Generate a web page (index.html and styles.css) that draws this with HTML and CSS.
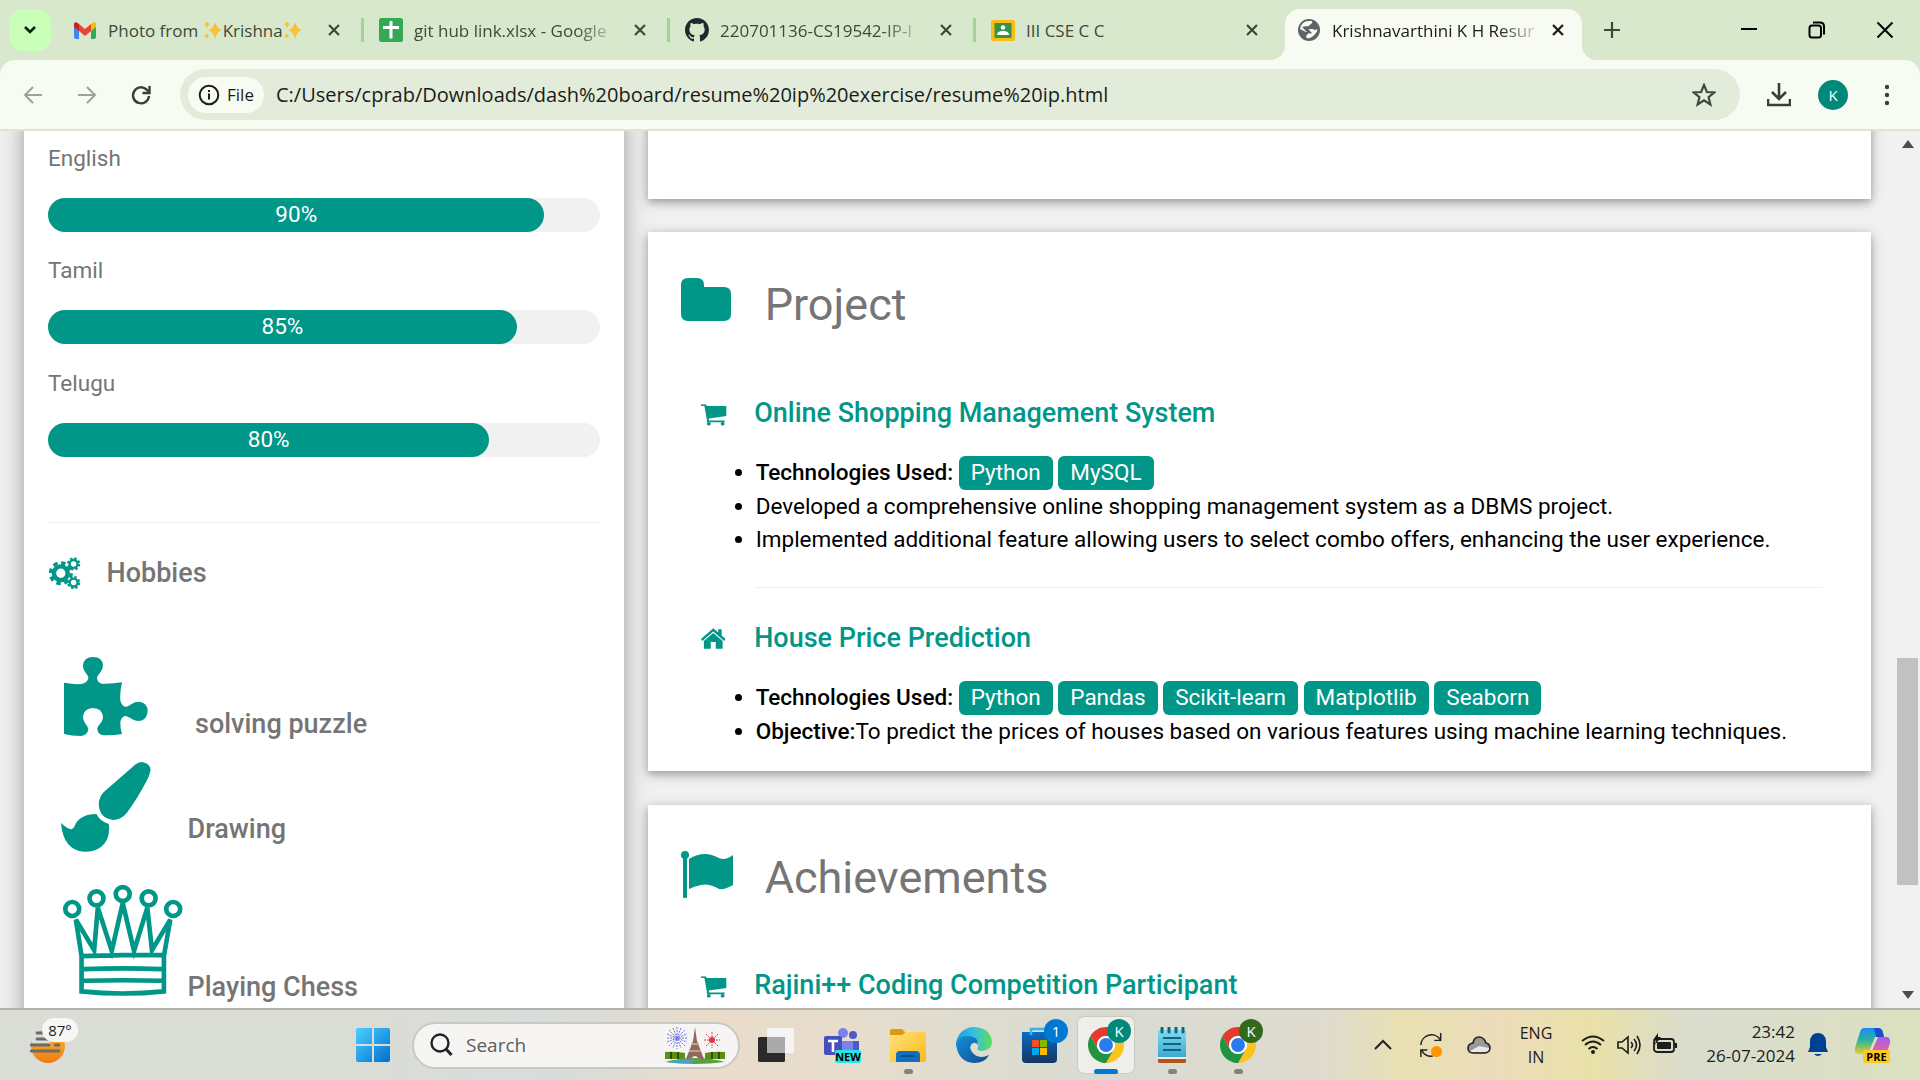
FILE: index.html
```html
<!DOCTYPE html>
<html lang="en">
<head>
<meta charset="utf-8">
<title>Krishnavarthini K H Resume</title>
<link rel="stylesheet" href="styles.css">
</head>
<body>
<svg class="defs" aria-hidden="true">
  <defs>
    <linearGradient id="winblue" x1="0" y1="0" x2="1" y2="1"><stop offset="0" stop-color="#4bd0ff"/><stop offset="1" stop-color="#006fd0"/></linearGradient>
    <linearGradient id="sun" x1="0" y1="0" x2="0" y2="1"><stop offset="0" stop-color="#f8c035"/><stop offset="1" stop-color="#f07a12"/></linearGradient>
    <linearGradient id="folder" x1="0" y1="0" x2="1" y2="1"><stop offset="0" stop-color="#ffe080"/><stop offset="1" stop-color="#fdbb12"/></linearGradient>
    <linearGradient id="edgetop" x1="0" y1="0" x2="1" y2="0"><stop offset="0" stop-color="#1b9de2"/><stop offset=".5" stop-color="#35c1e0"/><stop offset="1" stop-color="#5fdc55"/></linearGradient>
    <linearGradient id="edgelow" x1="0" y1="0" x2="1" y2="1"><stop offset="0" stop-color="#1490df"/><stop offset="1" stop-color="#114a8b"/></linearGradient>
    <linearGradient id="store" x1="0" y1="0" x2="0" y2="1"><stop offset="0" stop-color="#0a6cc4"/><stop offset="1" stop-color="#163560"/></linearGradient>
    <linearGradient id="note" x1="0" y1="0" x2="0" y2="1"><stop offset="0" stop-color="#7edcf0"/><stop offset="1" stop-color="#3ba9cf"/></linearGradient>
    <linearGradient id="copa" x1="0" y1="0" x2="0" y2="1"><stop offset="0" stop-color="#1a8cf0"/><stop offset=".5" stop-color="#2fb59a"/><stop offset="1" stop-color="#f0cb20"/></linearGradient>
    <linearGradient id="copb" x1="0" y1="0" x2="0" y2="1"><stop offset="0" stop-color="#a45cf0"/><stop offset="1" stop-color="#fb6a70"/></linearGradient>
    <symbol id="close" viewBox="0 0 24 24"><path d="M7 7l10 10M17 7L7 17" fill="none" stroke="currentColor" stroke-width="2.2"/></symbol>
    <symbol id="sparkle" viewBox="0 0 20 22"><path d="M12 3q2 7 7 8q-5 1-7 9q-2-8-7-9q5-1 7-8zM4 2q1 3 3 3q-2 1-3 4q-1-3-3-4q2 0 3-3zM4 14q0 2 2 3q-2 1-2 3q-1-2-3-3q2-1 3-3z" fill="#fac036"/></symbol>
    <symbol id="cart" viewBox="0 0 26 22"><path d="M0 0h5l1 2h20v10L8 14.500v2h16v2H6v-3L3.500 2H0z" fill="currentColor"/><circle cx="8" cy="20" r="2" fill="currentColor"/><circle cx="22" cy="20" r="2" fill="currentColor"/></symbol>
    <symbol id="chrome" viewBox="2 2 44 44"><path d="M4.950 13A22 22 0 0 1 43.050 13H24A11 11 0 0 0 14.470 29.500z" fill="#e33b2e"/><path d="M43.050 13A22 22 0 0 1 24 46L33.530 29.500A11 11 0 0 0 24 13z" fill="#fcc31e"/><path d="M24 46A22 22 0 0 1 4.950 13L14.470 29.500A11 11 0 0 0 33.530 29.500z" fill="#229342"/><circle cx="24" cy="24" r="11" fill="#fff"/><circle cx="24" cy="24" r="8.500" fill="#2a7bec"/></symbol>
  </defs>
</svg>

<header class="browser">
  <div class="tabstrip">
    <button class="tab-search" aria-label="Search tabs"><svg width="16" height="16" viewBox="0 0 16 16"><path d="M3 5l5 5 5-5" fill="none" stroke="#0c1f08" stroke-width="2.600"/></svg></button>
    <div class="tab">
      <svg class="favicon" viewBox="0 0 24 24"><path d="M1 5v14q0 2 2 2h3V10z" fill="#4285f4"/><path d="M23 5v14q0 2-2 2h-3V10z" fill="#34a853"/><path d="M18 6l2-1.500q3-1 3 2V9l-5 4z" fill="#fbbc04"/><path d="M6 6v7l6 5 6-5V6l-6 5z" fill="#ea4335"/><path d="M1 9V6.500q0-3 3-2L6 6v7z" fill="#c5221f"/></svg>
      <span class="tab-title">Photo from <svg class="spark"><use href="#sparkle"/></svg>Krishna<svg class="spark"><use href="#sparkle"/></svg></span>
      <button class="tab-close" aria-label="Close tab"><svg><use href="#close"/></svg></button>
    </div>
    <div class="tab">
      <svg class="favicon" viewBox="0 0 24 24"><rect width="24" height="24" rx="2.500" fill="#34a853"/><path d="M10.500 3h3v5H20v3h-6.500v9.500h-3V11H4V8h6.500z" fill="#fff"/></svg>
      <span class="tab-title fade">git hub link.xlsx - Google</span>
      <button class="tab-close" aria-label="Close tab"><svg><use href="#close"/></svg></button>
    </div>
    <div class="tab">
      <svg class="favicon" viewBox="0 0 16 16"><path fill="#20282e" d="M8 0C3.580 0 0 3.580 0 8c0 3.540 2.290 6.530 5.470 7.590.4.070.55-.17.55-.38 0-.19-.01-.82-.01-1.490-2.010.37-2.530-.49-2.690-.94-.09-.23-.48-.94-.82-1.130-.28-.15-.68-.52-.01-.53.63-.01 1.080.58 1.230.82.72 1.210 1.870.87 2.330.66.070-.52.28-.87.51-1.070-1.780-.2-3.640-.89-3.640-3.950 0-.87.31-1.590.82-2.150-.08-.2-.36-1.020.08-2.120 0 0 .67-.21 2.200.82.64-.18 1.320-.27 2-.27s1.360.09 2 .27c1.530-1.040 2.200-.82 2.200-.82.44 1.100.16 1.920.08 2.120.51.56.82 1.270.82 2.150 0 3.070-1.870 3.750-3.650 3.950.29.25.54.73.54 1.480 0 1.070-.01 1.930-.01 2.200 0 .21.150.46.55.38A8.010 8.010 0 0 0 16 8c0-4.420-3.580-8-8-8z"/></svg>
      <span class="tab-title fade">220701136-CS19542-IP-l</span>
      <button class="tab-close" aria-label="Close tab"><svg><use href="#close"/></svg></button>
    </div>
    <div class="tab tab-last">
      <svg class="favicon" viewBox="0 0 24 24"><rect y="2" width="24" height="21" rx="2" fill="#f9bd15"/><rect x="3.500" y="5" width="17" height="15" fill="#37924a"/><circle cx="12" cy="9.500" r="2.200" fill="#fff"/><path d="M6 17q0-4 6-4t6 4z" fill="#fff"/></svg>
      <span class="tab-title">III CSE C C</span>
      <button class="tab-close" aria-label="Close tab"><svg><use href="#close"/></svg></button>
    </div>
    <div class="tab tab-active">
      <svg class="favicon" viewBox="0 0 24 24"><circle cx="12" cy="12" r="11" fill="#5f6368"/><path d="M12 3h3q1 2-1 3t-3 3q0 2 2 2h3q2 2 4 0 1 1-1 4t-6 5q-3 1-4-1 0-2 2-3v-2H9L3 11q0-3 3-6 2-2 6-2z" fill="#f8fbf2"/><path d="M10 8q4 1 2 4l3 3q-2 1-4 0L5 9z" fill="#5f6368"/></svg>
      <span class="tab-title fade">Krishnavarthini K H Resur</span>
      <button class="tab-close" aria-label="Close tab"><svg><use href="#close"/></svg></button>
    </div>
    <button class="new-tab" aria-label="New tab"><svg width="24" height="24" viewBox="0 0 24 24"><path d="M12 4v16M4 12h16" stroke="#3b4a37" stroke-width="2.200"/></svg></button>
    <div class="window-controls">
      <button aria-label="Minimize"><svg viewBox="0 0 24 24"><path d="M4 11h16" stroke="#000" stroke-width="2"/></svg></button>
      <button aria-label="Restore"><svg viewBox="0 0 24 24"><rect x="4.500" y="7.500" width="11.500" height="12" rx="2.500" fill="none" stroke="#000" stroke-width="2"/><path d="M8 4.500h7q4 0 4 4v8" fill="none" stroke="#000" stroke-width="2"/></svg></button>
      <button aria-label="Close"><svg viewBox="0 0 24 24"><path d="M4.500 4.500l15 15M19.500 4.500l-15 15" stroke="#000" stroke-width="2"/></svg></button>
    </div>
  </div>
  <div class="toolbar">
    <button class="nav" aria-label="Back"><svg viewBox="0 0 24 24"><path d="M21 12H4M12 4l-8 8 8 8" fill="none" stroke="#9aa396" stroke-width="2"/></svg></button>
    <button class="nav" aria-label="Forward"><svg viewBox="0 0 24 24"><path d="M3 12h17M12 4l8 8-8 8" fill="none" stroke="#9aa396" stroke-width="2"/></svg></button>
    <button class="nav" aria-label="Reload"><svg viewBox="0 0 24 24"><path d="M20 13a8 8 0 1 1-2.500-6.500L20 9" fill="none" stroke="#33432f" stroke-width="2.400"/><path d="M20.500 3v7h-7" fill="none" stroke="#33432f" stroke-width="2.400"/></svg></button>
    <div class="omnibox">
      <button class="file-chip"><svg width="22" height="22" viewBox="0 0 22 22"><circle cx="11" cy="11" r="9.300" fill="none" stroke="#1a1c18" stroke-width="2"/><path d="M11 9.500v6M11 6v2" stroke="#1a1c18" stroke-width="2"/></svg>File</button>
      <input class="url" aria-label="Address" value="C:/Users/cprab/Downloads/dash%20board/resume%20ip%20exercise/resume%20ip.html">
      <button class="star" aria-label="Bookmark"><svg viewBox="0 0 24 24"><path d="M12 2l2.900 7 7.300.5-5.600 4.700 1.800 7.300L12 17.400l-6.400 4.100 1.800-7.300L1.800 9.500 9.100 9z" fill="none" stroke="#40493d" stroke-width="2.200"/></svg></button>
    </div>
    <button class="tool" aria-label="Downloads"><svg viewBox="0 0 24 24"><path d="M12 0v15M5 9l7 7 7-7M1 16v6h22v-6" fill="none" stroke="#33432f" stroke-width="2.600"/></svg></button>
    <button class="profile" aria-label="Profile">K</button>
    <button class="tool" aria-label="Menu"><svg viewBox="0 0 24 24"><g fill="#33432f"><circle cx="12" cy="4" r="2.200"/><circle cx="12" cy="12" r="2.200"/><circle cx="12" cy="20" r="2.200"/></g></svg></button>
  </div>
</header>

<main class="viewport">
  <div class="scroller">
    <div class="page">
      <aside class="sidebar">
        <p>English</p>
        <div class="meter"><div class="meter-fill" style="width:90%">90%</div></div>
        <p>Tamil</p>
        <div class="meter"><div class="meter-fill" style="width:85%">85%</div></div>
        <p>Telugu</p>
        <div class="meter"><div class="meter-fill" style="width:80%">80%</div></div>
        <br>
        <hr>
        <h4 class="side-title"><svg class="fw" viewBox="0 0 35 34"><g fill="none" stroke="#009688"><circle cx="13" cy="17" r="7" stroke-width="4.500"/><circle cx="13" cy="17" r="10.500" stroke-width="3.500" stroke-dasharray="4.500 3.750"/><circle cx="26" cy="7.500" r="4" stroke-width="2.400"/><circle cx="26" cy="7.500" r="5.700" stroke-width="2" stroke-dasharray="2.500 1.980"/><circle cx="26" cy="26.500" r="4" stroke-width="2.400"/><circle cx="26" cy="26.500" r="5.700" stroke-width="2" stroke-dasharray="2.500 1.980"/></g></svg>Hobbies</h4>
        <ul class="hobbies">
          <li><svg width="98" height="66" viewBox="144 138 441 297"><path fill="#009688" d="M192 248Q230 255 248 251Q266 245 265 231C262 222 249 214 249 196Q252 171 279 171Q307 171 309 196C308 215 294 222 291 233Q292 248 306 251Q335 252 366 247Q359 280 361 302Q366 320 379 320C393 316 398 305 418 305Q443 308 443 334Q441 362 417 363C396 362 389 350 377 348Q364 349 361 366Q360 385 366 402Q330 408 306 405Q291 400 292 384C296 372 308 368 309 350Q306 325 279 324Q251 326 249 350C250 370 264 376 265 387Q263 405 243 408Q215 408 192 402Z"/></svg>solving puzzle</li>
          <li><svg width="93" height="70" viewBox="144 435 420 315"><path fill="#009688" d="M407 493Q418 485 430 486Q452 490 453 510Q450 528 440 544Q412 597 381 639Q364 660 340 660Q298 655 297 613Q297 590 313 575ZM183 669Q202 686 214 688Q221 687 224 678Q238 643 290 642Q300 664 327 672Q333 715 306 739Q285 757 252 756Q190 750 183 669Z"/></svg>Drawing</li>
          <li><svg width="93" height="105" viewBox="144 750 420 471"><g fill="none" stroke="#009688" stroke-width="14"><circle cx="217" cy="926" r="21"/><circle cx="290" cy="894" r="21"/><circle cx="369" cy="881" r="21"/><circle cx="447" cy="894" r="21"/><circle cx="521" cy="926" r="21"/><path d="M245 1068L228 958L283 1050L294 922L336 1052L369 908L403 1052L443 922L457 1050L512 958L493 1068M245 1064V1174Q369 1187 493 1174V1064Q369 1064 245 1068M252 1107Q369 1103 486 1107M252 1142Q369 1139 486 1142"/></g></svg>Playing Chess</li>
        </ul>
      </aside>

      <div class="content">
        <section class="card card-previous"></section>

        <section class="card">
          <h2><svg class="fw" viewBox="0 0 69 54"><path fill="#009688" d="M9 11q0-7 7-7h9q7 0 7 7v2h20q7 0 7 7v20q0 7-7 7H16q-7 0-7-7z"/></svg>Project</h2>
          <div class="entry">
            <h5><svg class="fw" viewBox="0 0 35 27"><use href="#cart" x="5" y="4" width="26" height="22"/></svg>Online Shopping Management System</h5>
            <ul>
              <li><b>Technologies Used:</b> <span class="tag">Python</span> <span class="tag">MySQL</span></li>
              <li>Developed a comprehensive online shopping management system as a DBMS project.</li>
              <li>Implemented additional feature allowing users to select combo offers, enhancing the user experience.</li>
            </ul>
            <hr>
            <h5><svg class="fw" viewBox="0 0 35 27"><path fill="#009688" d="M17.500 3L5 14l1.500 2L17.500 6.500 28.500 16l1.500-2-4-3.500V4h-3.500v3.500zM8 16l9.500-8 9.500 8v8h-7v-7h-5v7H8z"/></svg>House Price Prediction</h5>
            <ul>
              <li><b>Technologies Used:</b> <span class="tag">Python</span> <span class="tag">Pandas</span> <span class="tag">Scikit-learn</span> <span class="tag">Matplotlib</span> <span class="tag">Seaborn</span></li>
              <li><b>Objective:</b>To predict the prices of houses based on various features using machine learning techniques.</li>
            </ul>
          </div>
        </section>

        <section class="card card-last">
          <h2><svg class="fw" viewBox="0 0 69 54"><g fill="#009688"><circle cx="13" cy="8" r="4"/><rect x="11" y="8" width="4" height="43" rx="1"/><path d="M17 12q8-5 16-5 6 0 14 4 6 3 14-3v30q-8 5-14 4-10-6-18-4-6 1-12 4z"/></g></svg>Achievements</h2>
          <div class="entry">
            <h5><svg class="fw" viewBox="0 0 35 27"><use href="#cart" x="5" y="4" width="26" height="22"/></svg>Rajini++ Coding Competition Participant</h5>
          </div>
        </section>
      </div>
    </div>
  </div>
  <div class="scrollbar">
    <svg width="12" height="8" viewBox="0 0 12 8"><path d="M6 0l6 8H0z" fill="#4d4d4d"/></svg>
    <div class="track"><div class="thumb"></div></div>
    <svg width="12" height="8" viewBox="0 0 12 8"><path d="M6 8l6-8H0z" fill="#4d4d4d"/></svg>
  </div>
</main>

<footer class="taskbar">
  <button class="weather" aria-label="Weather">
    <svg width="36" height="44" viewBox="0 0 36 44"><circle cx="18" cy="25" r="17" fill="url(#sun)"/><path d="M20 17h-18" stroke="#dcded8" stroke-width="11"/><path d="M7 12h12M7 18h22M1 24h18M25 24h4M1 30h28" stroke="#6b6b6b" stroke-width="2.800" stroke-linecap="round"/></svg>
    <span class="weather-badge">87°</span>
  </button>
  <div class="apps">
    <button class="start" aria-label="Start"><svg width="36" height="36" viewBox="0 0 36 36"><path fill="url(#winblue)" d="M1 3q0-2 2-2h14v16H1zM19 1h14q2 0 2 2v14H19zM1 19h16v16H3q-2 0-2-2zM19 19h16v14q0 2-2 2H19z"/></svg></button>
    <div class="search">
      <svg width="24" height="24" viewBox="0 0 24 24"><circle cx="11" cy="10" r="8.500" fill="none" stroke="#222" stroke-width="2.400"/><path d="M17 16l5.500 6" stroke="#222" stroke-width="3"/></svg>
      <input aria-label="Search" placeholder="Search">
      <svg width="62" height="38" viewBox="0 0 62 38"><path d="M1 36q30-8 60 0-30 4-60 0z" fill="#58a13f"/><path d="M4 36q12-4 28-2l-6 3q-14 1-22-1z" fill="#47a3c4"/><path d="M31 1l2 14 7 18h-5q-4-6-8 0h-5l7-18z" fill="#8f6a5c"/><path d="M27 18h8M25 25h12" stroke="#d8b09a" stroke-width="1.500"/><path d="M1 26q10-1 20 1v6H1zM41 27q10-2 20-1v7H41z" fill="#5d8f12"/><path d="M7 26v7M14 26v7M48 26v7M55 26v7" stroke="#264f12" stroke-width="2"/><g stroke="#6a70e8" stroke-width="1" stroke-dasharray="2 1"><path d="M13 1v22M3 12h20M5 4l16 16M21 4L5 20M9 2l8 20M17 2L9 22M3 8l20 8M3 16l20-8"/></g><g stroke="#e0404a" stroke-width="1" stroke-dasharray="2 1"><path d="M48 6v16M40 14h16M42 8l12 12M54 8L42 20"/></g><circle cx="48" cy="14" r="3" fill="#dc3844"/></svg>
    </div>
    <button class="app" aria-label="Task view"><svg viewBox="0 0 36 36"><rect y="10" width="27" height="25" rx="1.500" fill="#2a2a2a"/><rect x="9" y="1" width="27" height="25" rx="1" fill="#f4f4f4"/><path d="M9 10h18v16H9z" fill="#aaa"/></svg></button>
    <button class="app" aria-label="Teams"><svg viewBox="0 0 36 36"><circle cx="19" cy="6" r="5" fill="#7b83eb"/><circle cx="29" cy="8" r="4" fill="#5059c9"/><path d="M22 14h13v12q-2 6-8 5z" fill="#5059c9"/><path d="M14 14h15v14q-4 6-10 3z" fill="#7b83eb"/><rect y="9" width="18" height="19" rx="2" fill="#4650bd"/><path d="M4 14h10M9 14v11" stroke="#fff" stroke-width="2.600"/></svg><span class="new">NEW</span></button>
    <button class="app running" aria-label="File Explorer"><svg viewBox="0 0 36 36"><path d="M0 4q0-2 2-2h10l4 4v4H0z" fill="#dc9a10"/><path d="M0 8h12l4-3h18q2 0 2 2v27q0 1-2 1H0z" fill="url(#folder)"/><path d="M6 35v-7q0-4 4-4h16q4 0 4 4v7z" fill="#0f70bf"/><path d="M11 29h14" stroke="#0a4c8c" stroke-width="2"/></svg></button>
    <button class="app" aria-label="Edge"><svg viewBox="0 0 36 36"><path d="M0 19A18 18 0 0 1 18 0Q35 1 36 15q0 8-10 9-6 0-4-4 2-8-7-10Q4 10 0 19z" fill="url(#edgetop)"/><path d="M0 17Q3 8 13 9q10 1 9 9-2-3-5-2-5 3-1 9 6 8 17 3-4 8-15 8Q2 35 0 17z" fill="url(#edgelow)"/></svg></button>
    <button class="app" aria-label="Microsoft Store"><svg viewBox="0 0 36 36"><path d="M0 5h35v27q0 4-4 4H4q-4 0-4-4z" fill="url(#store)"/><path d="M9 8V2h14" fill="none" stroke="#35b5ee" stroke-width="2.500"/><path d="M10 13h7v7h-7z" fill="#f25022"/><path d="M18 13h7v7h-7z" fill="#7fba00"/><path d="M10 21h7v7h-7z" fill="#00a4ef"/><path d="M18 21h7v7h-7z" fill="#ffb900"/></svg><span class="badge blue">1</span></button>
    <button class="app active" aria-label="Chrome"><svg><use href="#chrome"/></svg><span class="badge teal">K</span></button>
    <button class="app running" aria-label="Notepad"><svg viewBox="0 0 36 36"><path d="M4 32h28v3q0 1-2 1H6q-2 0-2-1z" fill="#b5541a"/><path d="M4 28h28v4H4z" fill="#f2efec"/><path d="M4 4q0-1 2-1h24q2 0 2 1v26H4z" fill="url(#note)"/><path d="M9 11h18M9 17h18M9 23h18" stroke="#15627c" stroke-width="2"/><path d="M8 1v4M15 1v4M22 1v4M29 1v4" stroke="#15627c" stroke-width="3" stroke-linecap="round"/></svg></button>
    <button class="app running" aria-label="Chrome profile"><svg><use href="#chrome"/></svg><span class="badge green">K</span></button>
  </div>
  <div class="tray">
    <button aria-label="Hidden icons"><svg class="t" viewBox="0 0 24 24"><path d="M4 16l8-8 8 8" fill="none" stroke="#222" stroke-width="2"/></svg></button>
    <button class="wide" aria-label="Updates"><svg class="t" viewBox="0 0 24 26"><path d="M1 13A11.500 11.500 0 0 1 22 7M22.500 0v8h-7M14 25Q6 26 2 19M1 26v-7.500h7" fill="none" stroke="#222" stroke-width="1.600"/><circle cx="18" cy="20" r="6" fill="#ff9500"/></svg></button>
    <button class="wide" aria-label="OneDrive"><svg class="t" viewBox="0 0 24 24"><path d="M6 20q-5 0-5-5 0-4 5-5 1-6 6-6t7 6q4 1 4 5t-5 5z" fill="#999" stroke="#222" stroke-width="1.600"/><path d="M3 18l9-5 10 2q0 4-4 4H6q-2 0-3-1z" fill="#e8e8e8"/></svg></button>
    <button class="lang">ENG<br>IN</button>
    <button class="status" aria-label="Network, volume and battery">
      <svg class="t" viewBox="0 0 24 24"><path d="M1 8q11-9 22 0M4 12q8-7 16 0M7.500 16q4.500-4 9 0" fill="none" stroke="#1c1c1c" stroke-width="1.800"/><circle cx="12" cy="19" r="2" fill="#1c1c1c"/></svg>
      <svg class="t" viewBox="0 0 24 24"><path d="M1 9h4l6-5v16l-6-5H1zM14 9q3 3 0 6M17 6q5 6 0 12M20 3q6 9 0 18" fill="none" stroke="#1c1c1c" stroke-width="1.600"/></svg>
      <svg class="t" viewBox="0 0 24 24"><rect x="1" y="6" width="20" height="13" rx="3" fill="none" stroke="#1c1c1c" stroke-width="1.800"/><rect x="4" y="9" width="14" height="7" rx="1" fill="#1c1c1c"/><path d="M22 10h2v5h-2z" fill="#1c1c1c"/><path d="M5 0L0 7h3l-1 5 6-8H5z" fill="#1c1c1c"/></svg>
    </button>
    <button class="clock">23:42<br>26-07-2024</button>
    <button class="bell" aria-label="Notifications"><svg width="20" height="26" viewBox="0 0 20 26"><path d="M10 1q7 0 8 8v6l2 5H0l2-5V9q1-8 8-8zM6 22h8q-4 4-8 0z" fill="#003f92"/></svg></button>
    <button class="copilot" aria-label="Copilot"><svg width="36" height="36" viewBox="0 0 36 36"><path d="M9 1h14q4 0 5 5l1 4h-9l-7 17H3q-4-1-3-6L5 5q1-4 4-4z" fill="url(#copa)"/><path d="M19 1h4q4 0 5 5l1 4h-8z" fill="#1a4fc8"/><path d="M23 10h9q4 1 3 6l-4 12q-1 4-5 4H12q3-1 5-8z" fill="url(#copb)"/></svg><span class="pre">PRE</span></button>
  </div>
</footer>
</body>
</html>
```
FILE: styles.css
```css
* { box-sizing: border-box; }

body {
  margin: 0;
  height: 100vh;
  display: flex;
  flex-direction: column;
  overflow: hidden;
  font-family: "Open Sans", "Noto Sans", sans-serif;
}

button, input {
  font: inherit;
  color: inherit;
  border: 0;
  padding: 0;
  margin: 0;
  background: none;
}

button {
  display: flex;
  align-items: center;
  justify-content: center;
  flex-shrink: 0;
}

svg { flex-shrink: 0; }
.defs { position: absolute; width: 0; height: 0; }

/* Browser chrome */
.browser { background: #d8e8cd; flex-shrink: 0; }
.tabstrip { display: flex; align-items: center; height: 60px; padding-left: 9px; color: #3b4a37; }
.tab-search { width: 42px; height: 42px; border-radius: 14px; background: #c9ffb8; margin-right: 7px; }

.tab {
  display: flex;
  align-items: center;
  flex: 0 1 306px;
  min-width: 0;
  height: 24px;
  padding: 0 15px;
  border-right: 3px solid #a3d494;
}
.tab-last { border-right-color: transparent; }
.favicon { width: 24px; height: 24px; margin-right: 11px; }
.tab-title {
  flex: 1;
  min-width: 0;
  overflow: hidden;
  white-space: nowrap;
  font-size: 17px;
  line-height: 24px;
  padding-top: 2px;
}
.fade { mask-image: linear-gradient(90deg, #000 calc(100% - 36px), rgba(0, 0, 0, .2)); }
.spark { width: 20px; height: 22px; vertical-align: top; }
.tab-close { margin-left: 16px; }
.tab-close svg { width: 24px; height: 24px; }

.tab-active {
  position: relative;
  flex-basis: 297px;
  align-self: flex-end;
  height: 51px;
  padding: 0 12px 9px;
  margin-left: 3px;
  border: 0;
  border-radius: 15px 15px 0 0;
  background: #f8fbf2;
  color: #1a1c18;
}
.tab-active .tab-close { margin-left: 12px; }
.tab-active::before, .tab-active::after {
  content: "";
  position: absolute;
  bottom: 0;
  width: 15px;
  height: 15px;
}
.tab-active::before { right: 100%; background: radial-gradient(circle at 0 0, transparent 15px, #f8fbf2 15px); }
.tab-active::after { left: 100%; background: radial-gradient(circle at 100% 0, transparent 15px, #f8fbf2 15px); }

.new-tab { margin-left: 18px; }
.window-controls { display: flex; margin-left: auto; padding-right: 1px; }
.window-controls button { width: 68px; height: 60px; }
.window-controls svg { width: 24px; height: 24px; }

.toolbar {
  display: flex;
  align-items: center;
  height: 71px;
  padding: 0 21px 0 6px;
  border-bottom: 2px solid #dfe5d4;
  border-radius: 15px 15px 0 0;
  background: #f8fbf2;
}
.nav { width: 54px; height: 54px; }
.nav svg, .star svg, .tool svg { width: 24px; height: 24px; }
.omnibox {
  display: flex;
  align-items: center;
  flex: 1;
  height: 51px;
  margin-left: 12px;
  padding: 0 24px 0 8px;
  border-radius: 26px;
  background: #e3ecdb;
  color: #1a1c18;
}
.file-chip {
  width: 76px;
  height: 36px;
  gap: 7px;
  border-radius: 18px;
  background: #f8fbf2;
  font-size: 17px;
}
.url { flex: 1; height: 36px; margin-left: 12px; font-size: 20px; }
.tool { width: 24px; margin: 0 0 0 27px; }
.profile {
  width: 30px;
  height: 30px;
  margin-left: 27px;
  border-radius: 50%;
  background: #00897b;
  color: #fff;
  font-size: 15px;
}

/* Page viewport and scrollbar */
.viewport { display: flex; flex: 1; min-height: 0; background: #f1f1f1; }
.scroller { flex: 1; min-width: 0; overflow: hidden; }
.scrollbar {
  display: flex;
  flex-direction: column;
  align-items: center;
  justify-content: space-between;
  width: 25px;
  padding: 9px 0;
}
.track { display: grid; flex: 1; width: 21px; margin: 4px 0; grid-template-rows: 507fr 227fr 102fr; }
.thumb { grid-row: 2; background: #c1c1c1; }

/* Résumé page, shown at 150% */
.page {
  zoom: 1.5;
  display: grid;
  grid-template-columns: 1fr 2fr;
  gap: 0;
  min-height: 100%;
  margin: -15px 8px 0;
  font-family: Roboto, "Liberation Sans", sans-serif;
  font-size: 15px;
  line-height: 1.5;
  color: #000;
}
.page h2, .page h4, .page h5 { font-weight: 400; margin: 0; }
.page hr { border: 0; border-top: 1px solid #eee; margin: 20px 0; }
.page b { font-weight: 500; }

.sidebar {
  margin: 0 8px;
  padding: 22px 16px 16px;
  background: #fff;
  color: #757575;
  box-shadow: 0 4px 10px rgba(0, 0, 0, .2), 0 4px 20px rgba(0, 0, 0, .19);
}
.sidebar p { margin: 15px 0; }
.sidebar p:first-child { margin-top: 0; }
.meter { border-radius: 16px; background: #f1f1f1; }
.meter-fill { border-radius: 16px; background: #009688; color: #fff; text-align: center; }
.page .sidebar hr { margin-top: 21px; }

.fw { height: 1em; width: 23px; margin-right: 16px; }
.page .side-title { display: flex; align-items: center; font-size: 18px; font-weight: 500; }
.side-title .fw { height: 23px; }
.hobbies { list-style: none; margin: 35px 0 0; padding: 0; font-size: 18px; font-weight: 500; }
.hobbies li { display: flex; align-items: flex-end; }
.hobbies svg { overflow: visible; }

.content { margin: 0 8px; min-width: 0; }
.card {
  margin-bottom: 1.5em;
  padding: 0 16px;
  overflow: auto;
  background: #fff;
  box-shadow: 0 2px 5px rgba(0, 0, 0, .26), 0 2px 10px rgba(0, 0, 0, .16);
}
.card-previous { height: 60px; }
.card-last { padding-bottom: 32px; }
.page .card h2 {
  display: flex;
  align-items: center;
  margin: 10px 0;
  padding: 16px 0;
  font-size: 30px;
  color: #757575;
}
.card h2 .fw { width: 46px; height: 36px; margin-bottom: 5px; }
.entry { padding: 10px 16px 0; }
.page .card h5 { display: flex; align-items: center; font-size: 18px; font-weight: 500; color: #009688; }
.card ul { margin: 15px 0; padding-left: 40px; }
.card .entry hr { margin-left: 40px; }
.tag {
  display: inline-block;
  padding: 0 8px;
  border-radius: 4px;
  background: #009688;
  color: #fff;
}

/* Taskbar */
.taskbar {
  display: flex;
  align-items: center;
  flex-shrink: 0;
  height: 72px;
  padding-right: 29px;
  border-top: 2px solid #b3b3ab;
  background: linear-gradient(90deg, #dadcd6 0, #dadcd6 20%, #d8dddb 26%, #d9dcd9 30%, #eadccb 37%, #e6ddcd 45%, #dddcd0 52%, #d9dbd3 58%, #dfdbce 69%, #e9e0b2 73%, #ecdcba 78%, #e9e1a8 83%, #dadcce 88%, #dbe1c0 100%);
  color: #1c1c1c;
}
.weather { position: relative; margin: 0 289px 4px 30px; }
.weather-badge {
  position: absolute;
  left: 12px;
  top: -3px;
  width: 36px;
  height: 24px;
  border-radius: 12px;
  background: #f6f6f4;
  font-size: 15px;
  line-height: 24px;
}
.apps { display: flex; align-items: center; }
.search {
  display: flex;
  align-items: center;
  width: 328px;
  height: 47px;
  margin: 0 3px 0 21px;
  padding: 0 12px 0 15px;
  border: 2px solid #c9c9c4;
  border-radius: 24px;
  background: #f6f5f3;
}
.search input { flex: 1; min-width: 0; margin-left: 13px; font-size: 19px; }
.search input::placeholder { color: #5c5c5c; opacity: 1; }
.app { position: relative; width: 56px; height: 56px; margin: 0 5px; border-radius: 6px; }
.app svg { width: 36px; height: 36px; }
.app.active { background: #f0eeea; box-shadow: 0 0 1px 1px rgba(0, 0, 0, .08); }
.app.running::after, .app.active::after {
  content: "";
  position: absolute;
  bottom: -1px;
  width: 9px;
  height: 5px;
  border-radius: 3px;
  background: #85827b;
}
.app.active::after { width: 24px; background: #0078d4; }
.badge {
  position: absolute;
  right: 3px;
  top: 2px;
  width: 24px;
  height: 24px;
  border-radius: 50%;
  color: #fff;
  font-size: 15px;
  line-height: 24px;
}
.badge.blue { background: #0078d4; right: 0; }
.badge.teal { background: #00897b; }
.badge.green { background: #33691e; }
.new, .pre {
  position: absolute;
  left: 21px;
  bottom: 10px;
  width: 26px;
  height: 13px;
  border-radius: 2px;
  background: #25e6ea;
  color: #000;
  font-size: 11px;
  font-weight: 700;
  line-height: 13px;
}

.tray { display: flex; align-items: center; margin-left: auto; }
.t { width: 24px; height: 24px; }
.tray .wide { margin-left: 24px; }
.lang, .clock { line-height: 24px; }
.lang { width: 42px; margin: 0 24px; font-size: 16px; }
.status { gap: 12px; }
.clock { width: 106px; margin: 0 13px 0 12px; text-align: right; justify-content: flex-end; font-size: 17px; padding-bottom: 2px; }
.copilot { position: relative; margin-left: 27px; }
.pre { left: 8px; bottom: 0; width: 27px; background: #ffc81e; }
```
